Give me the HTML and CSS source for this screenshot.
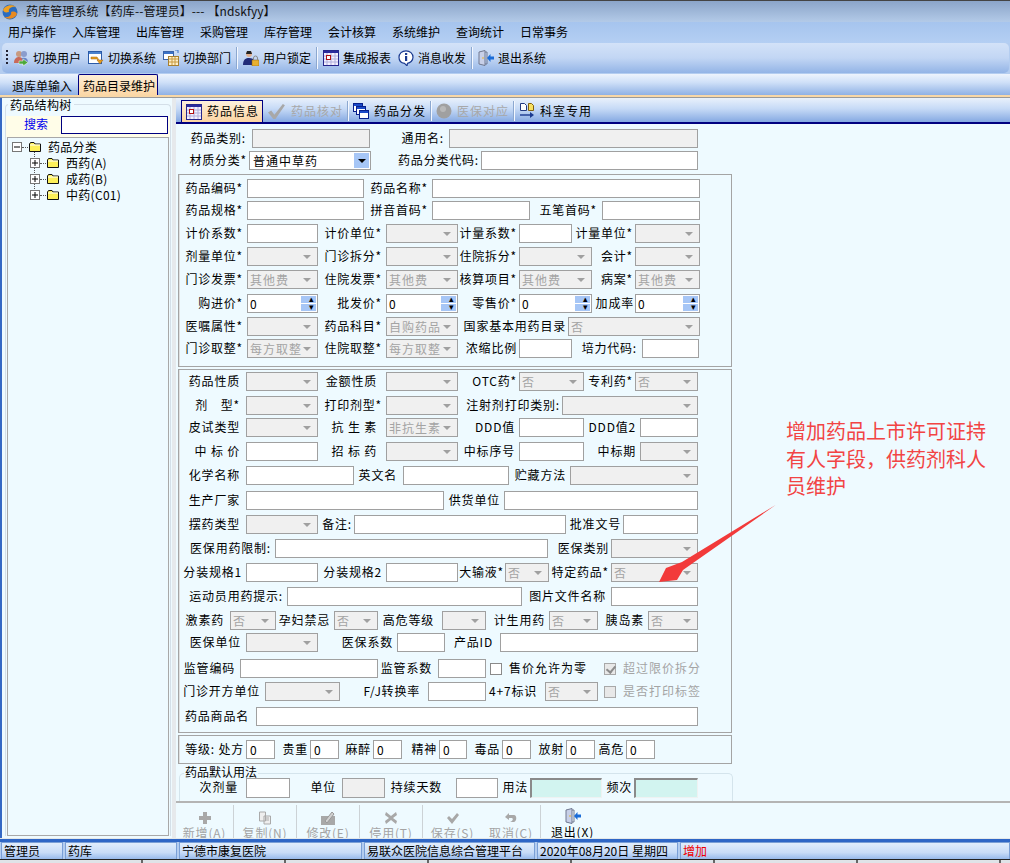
FILE: index.html
```
<!DOCTYPE html>
<html lang="zh">
<head>
<meta charset="utf-8">
<title>药库管理系统</title>
<link rel="stylesheet" href="styles.css">
</head>
<body>
<svg class="defs" width="0" height="0">
  <symbol id="grid" viewBox="0 0 16 16"><rect x=".5" y=".5" width="15" height="15" fill="#f4f0ff" stroke="#26268c"/><rect x="1" y="1" width="14" height="2" fill="#2a2a9c"/><path d="M1 6h14M1 9h14M1 12h14M4 3v12M8 3v12M12 3v12" stroke="#b0b0dc"/><rect x="3.5" y="5.5" width="4" height="4" fill="#fff" stroke="#b01010"/></symbol>
  <symbol id="folder" viewBox="0 0 12 10"><path d="M.5 9.5V2L1.5 .5H5l1 1.5h5.5v7.5z" fill="#fdf05a" stroke="#111"/><path d="M1 3h10" stroke="#fff"/></symbol>
  <symbol id="plus" viewBox="0 0 10 10"><rect x=".5" y=".5" width="9" height="9" fill="#fff" stroke="#777"/><path d="M2 5h6M5 2v6" stroke="#000"/></symbol>
  <symbol id="minus" viewBox="0 0 10 10"><rect x=".5" y=".5" width="9" height="9" fill="#fff" stroke="#777"/><path d="M2 5h6" stroke="#000"/></symbol>
</svg>

<header class="titlebar">
  <svg class="logo" viewBox="0 0 16 16" width="16" height="16"><circle cx="8" cy="8" r="7.5" fill="#2a6cc0"/><path d="M1 6C3 1 11 0 14 3 9 2 6 5 7 8 3 9 2 8 1 6z" fill="#f0a020"/><path d="M15 10c-2 5-9 6-13 3 5 1 8-2 7-5 4-1 5 0 6 2z" fill="#e88a20"/></svg>
  <span>药库管理系统【药库--管理员】--- 【ndskfyy】</span>
</header>

<nav class="menubar">
  <span>用户操作</span><span>入库管理</span><span>出库管理</span><span>采购管理</span><span>库存管理</span><span>会计核算</span><span>系统维护</span><span>查询统计</span><span>日常事务</span>
</nav>

<div class="toolbar">
  <i class="grip"></i>
  <div class="tool">
    <svg viewBox="0 0 16 16" width="16" height="16"><circle cx="6" cy="4" r="3" fill="#c89a80"/><circle cx="11" cy="4" r="3" fill="#8a9ccc"/><path d="M1 13c0-5 3-6 5-6s4 1 4 4v2z" fill="#c86a5a"/><path d="M9 8c3-1 6 0 6 4l-5 1z" fill="#6a86c8"/><path d="M6 11h4V9l5 3.5L10 16v-2H6z" fill="#4ca83a" stroke="#fff" stroke-width=".5"/></svg>
    <span>切换用户</span>
  </div>
  <div class="tool">
    <svg viewBox="0 0 16 16" width="16" height="16"><rect x=".5" y="1.5" width="13" height="12" fill="#fff" stroke="#2a5aa8"/><rect x="1" y="2" width="12" height="2" fill="#4a82d0"/><path d="M3 7h6l2 3h4l-3 4-3-4h1L9 9H3z" fill="#e8a020" stroke="#a06010" stroke-width=".5"/></svg>
    <span>切换系统</span>
  </div>
  <div class="tool">
    <svg viewBox="0 0 16 16" width="16" height="16"><rect x=".5" y="1.5" width="10" height="8" fill="#fff" stroke="#3a62a8"/><rect x="1" y="2" width="9" height="2" fill="#3a72c8"/><rect x="5.500" y="6.500" width="10" height="9" fill="#fff0c8" stroke="#a88030"/><path d="M6 9h9M6 12h9M9 7v8M12 7v8" stroke="#c89a40"/><path d="M12 0h3v3" fill="none" stroke="#3a72c8"/></svg>
    <span>切换部门</span>
  </div>
  <i class="sep"></i>
  <div class="tool">
    <svg viewBox="0 0 16 16" width="16" height="16"><circle cx="6" cy="4" r="3" fill="#e0b090"/><path d="M4 1h4l1 3H3z" fill="#222"/><path d="M0 15c0-6 3-7 6-7s5 1 5 3v4z" fill="#222c78"/><rect x="9" y="10" width="7" height="6" fill="#e8b030" stroke="#8a6010" stroke-width=".5"/><path d="M10.500 10V8a2 2 0 0 1 4 0v2" fill="none" stroke="#888"/></svg>
    <span>用户锁定</span>
  </div>
  <i class="sep"></i>
  <div class="tool"><svg width="16" height="16"><use href="#grid"/></svg><span>集成报表</span></div>
  <div class="tool">
    <svg viewBox="0 0 16 16" width="16" height="16"><path d="M8 .8c4 0 7 2.700 7 6.500 0 3.500-3 5.700-5.500 6l-.5 2.500-2.500-2.500C3.500 13 1 10.800 1 7.300 1 3.500 4 .8 8 .8z" fill="#fff" stroke="#1a3a90" stroke-width="1.200"/><rect x="7" y="3" width="2.200" height="2" fill="#1a3a90"/><rect x="7" y="6" width="2.200" height="5" fill="#1a3a90"/></svg>
    <span>消息收发</span>
  </div>
  <i class="sep"></i>
  <div class="tool">
    <svg viewBox="0 0 16 16" width="16" height="16"><path d="M1 2l6-1.500v15L1 14z" fill="#c8d0e8" stroke="#707890"/><path d="M7 2h2v12H7" fill="none" stroke="#707890"/><path d="M9 8l3.500-4v2.500H16v3h-3.500V12z" fill="#1a6cd8"/><circle cx="5" cy="8" r=".8" fill="#e8b020"/></svg>
    <span>退出系统</span>
  </div>
</div>

<div class="tabbar">
  <span class="tab">退库单输入</span>
  <span class="tab tab-on">药品目录维护</span>
</div>
<div class="stripe"></div>

<main class="main">
  <aside class="side">
    <div class="side-group">
      <span class="side-legend">药品结构树</span>
      <div class="search"><span class="search-lb">搜索</span><div class="search-box"></div></div>
      <div class="tree">
        <div class="node"><svg class="exp" width="10" height="10"><use href="#minus"/></svg><i class="dash"></i><svg width="12" height="10"><use href="#folder"/></svg><span class="node-name">药品分类</span></div>
        <div class="node node-kid"><i class="vline"></i><svg class="exp" width="10" height="10"><use href="#plus"/></svg><i class="dash"></i><svg width="12" height="10"><use href="#folder"/></svg><span class="node-name">西药(A)</span></div>
        <div class="node node-kid"><i class="vline"></i><svg class="exp" width="10" height="10"><use href="#plus"/></svg><i class="dash"></i><svg width="12" height="10"><use href="#folder"/></svg><span class="node-name">成药(B)</span></div>
        <div class="node node-kid"><i class="vline"></i><svg class="exp" width="10" height="10"><use href="#plus"/></svg><i class="dash"></i><svg width="12" height="10"><use href="#folder"/></svg><span class="node-name">中药(C01)</span></div>
      </div>
    </div>
  </aside>
  <div class="splitter"></div>

  <section class="work">
    <div class="subtabs">
      <div class="sub sub-on w82"><svg width="16" height="16"><use href="#grid"/></svg><span>药品信息</span></div>
      <div class="sub sub-off">
        <svg viewBox="0 0 18 16" width="19" height="17"><path d="M1 9l3-2 3 4L15 1l2 1L8 15H6z" fill="#a8a8a8"/></svg>
        <span>药品核对</span>
      </div>
      <i class="sub-sep"></i>
      <div class="sub">
        <svg viewBox="0 0 16 16" width="16" height="16"><rect x=".5" y=".5" width="9" height="8" fill="#fff" stroke="#08208c"/><rect x="1" y="1" width="8" height="2" fill="#1a4ac8"/><rect x="3.500" y="3.500" width="9" height="8" fill="#fff" stroke="#08208c"/><rect x="4" y="4" width="8" height="2" fill="#1a4ac8"/><rect x="6.500" y="7.500" width="9" height="8" fill="#fff" stroke="#08208c"/><rect x="7" y="8" width="8" height="2" fill="#1a4ac8"/></svg>
        <span>药品分发</span>
      </div>
      <i class="sub-sep"></i>
      <div class="sub sub-off">
        <svg viewBox="0 0 16 16" width="16" height="16"><circle cx="8" cy="8" r="7.500" fill="#a0a0a0"/><circle cx="7" cy="6" r="3" fill="#b8b8b8"/></svg>
        <span>医保对应</span>
      </div>
      <i class="sub-sep"></i>
      <div class="sub">
        <svg viewBox="0 0 16 16" width="16" height="16"><path d="M1.500 .5h4l2 2v5h-6z" fill="#fff" stroke="#223a80"/><path d="M9.500 .5h3l2 2v5h-5z" fill="#f8e060" stroke="#806010"/><path d="M1 12h11" stroke="#1a3a90" stroke-width="1.400"/><path d="M11 9l4 3-4 3z" fill="#1a3a90"/></svg>
        <span>科室专用</span>
      </div>
    </div>

    <div class="pane">
      <div class="form">
        <div class="row mt5"><label class="lb w74 pr6">药品类别:</label><div class="fld dis w118"></div><label class="lb w79 pr5">通用名:</label><div class="fld dis w249"></div></div>
        <div class="row mt3"><label class="lb w71 pr2">材质分类*</label><div class="fld sel sel-blue w122">普通中草药</div><label class="lb w110">药品分类代码:</label><div class="fld w217"></div></div>

        <fieldset class="group g1">
          <div class="row mt4"><label class="lb w67">药品编码*</label><div class="fld w117"></div><label class="lb w68">药品名称*</label><div class="fld w268"></div></div>
          <div class="row mt3"><label class="lb w67">药品规格*</label><div class="fld w117"></div><label class="lb w68">拼音首码*</label><div class="fld w98"></div><label class="lb w72">五笔首码*</label><div class="fld w98"></div></div>
          <div class="row mt4"><label class="lb w67">计价系数*</label><div class="fld w71"></div><label class="lb w68">计价单位*</label><div class="fld sel dis w72"></div><label class="lb w61">计量系数*</label><div class="fld w53"></div><label class="lb w63">计量单位*</label><div class="fld sel dis w65"></div></div>
          <div class="row mt4"><label class="lb w67">剂量单位*</label><div class="fld sel dis w71"></div><label class="lb w68">门诊拆分*</label><div class="fld sel dis w72"></div><label class="lb w61">住院拆分*</label><div class="fld sel dis w73"></div><label class="lb w43">会计*</label><div class="fld sel dis w65"></div></div>
          <div class="row mt4"><label class="lb w67">门诊发票*</label><div class="fld sel dis w71">其他费</div><label class="lb w68">住院发票*</label><div class="fld sel dis w72">其他费</div><label class="lb w61">核算项目*</label><div class="fld sel dis w73">其他费</div><label class="lb w43">病案*</label><div class="fld sel dis w65">其他费</div></div>
          <div class="row mt5"><label class="lb w67">购进价*</label><div class="fld spin w71">0</div><label class="lb w68">批发价*</label><div class="fld spin w72">0</div><label class="lb w61">零售价*</label><div class="fld spin w73">0</div><label class="lb w43 pr1">加成率</label><div class="fld spin w65">0</div></div>
          <div class="row mt4"><label class="lb w67">医嘱属性*</label><div class="fld sel dis w71"></div><label class="lb w68">药品科目*</label><div class="fld sel dis w72">自购药品</div><label class="lb w110">国家基本用药目录</label><div class="fld sel dis w132">否</div></div>
          <div class="row mt3"><label class="lb w67">门诊取整*</label><div class="fld sel dis w71">每方取整</div><label class="lb w68">住院取整*</label><div class="fld sel dis w72">每方取整</div><label class="lb w61">浓缩比例</label><div class="fld w53"></div><label class="lb w70 pr5">培力代码:</label><div class="fld w57"></div></div>
        </fieldset>

        <fieldset class="group g2">
          <div class="row mt2"><label class="lb w66 pr6">药品性质</label><div class="fld sel dis w72"></div><label class="lb w68 pr9">金额性质</label><div class="fld sel dis w72"></div><label class="lb w61">OTC药*</label><div class="fld sel dis w65">否</div><label class="lb w51">专利药*</label><div class="fld sel dis w63">否</div></div>
          <div class="row mt5"><label class="lb w66 pr6">剂　型*</label><div class="fld sel dis w72"></div><label class="lb w68">打印剂型*</label><div class="fld sel dis w72"></div><label class="lb w104">注射剂打印类别:</label><div class="fld sel dis w136"></div></div>
          <div class="row mt3"><label class="lb w66 pr6">皮试类型</label><div class="fld sel dis w72"></div><label class="lb w68 pr9">抗 生 素</label><div class="fld sel dis w72">非抗生素</div><label class="lb w61 pr4">DDD值</label><div class="fld w65"></div><label class="lb w56 pr4">DDD值2</label><div class="fld w58"></div></div>
          <div class="row mt5"><label class="lb w66 pr6">中 标 价</label><div class="fld w72"></div><label class="lb w68 pr9">招 标 药</label><div class="fld sel dis w72"></div><label class="lb w61 pr4">中标序号</label><div class="fld w65"></div><label class="lb w56 pr4">中标期</label><div class="fld sel dis w58"></div></div>
          <div class="row mt5"><label class="lb w66 pr6">化学名称</label><div class="fld w108"></div><label class="lb w49 pr6">英文名</label><div class="fld w106"></div><label class="lb w61 pr4">贮藏方法</label><div class="fld sel dis w128"></div></div>
          <div class="row mt6"><label class="lb w66 pr6">生产厂家</label><div class="fld w198"></div><label class="lb w60 pr4">供货单位</label><div class="fld w194"></div></div>
          <div class="row mt5"><label class="lb w66 pr6">摆药类型</label><div class="fld sel dis w72"></div><label class="lb w36 pr2">备注:</label><div class="fld w212"></div><label class="lb w57">批准文号</label><div class="fld w75"></div></div>
          <div class="row mt5"><label class="lb w95 pr4">医保用药限制:</label><div class="fld w273"></div><label class="lb w63">医保类别</label><div class="fld sel dis w87"></div></div>
          <div class="row mt5"><label class="lb w66 pr4">分装规格1</label><div class="fld w72"></div><label class="lb w68">分装规格2</label><div class="fld w72"></div><label class="lb w47 pr1">大输液*</label><div class="fld sel dis w44">否</div><label class="lb w62">特定药品*</label><div class="fld sel dis w87">否</div></div>
          <div class="row mt5"><label class="lb w107 pr4">运动员用药提示:</label><div class="fld w235"></div><label class="lb w89 pr5">图片文件名称</label><div class="fld w87"></div></div>
          <div class="row mt5"><label class="lb w50 pr6">激素药</label><div class="fld sel dis w46">否</div><label class="lb w58 pr4">孕妇禁忌</label><div class="fld sel dis w44">否</div><label class="lb w64 pr8">高危等级</label><div class="fld sel dis w44"></div><label class="lb w63 pr4">计生用药</label><div class="fld sel dis w49">否</div><label class="lb w50 pr4">胰岛素</label><div class="fld sel dis w50">否</div></div>
          <div class="row mt3"><label class="lb w66 pr5">医保单位</label><div class="fld sel dis w72"></div><label class="lb w79 pr4">医保系数</label><div class="fld w48"></div><label class="lb w55 pr7">产品ID</label><div class="fld w198"></div></div>
          <div class="row mt7"><label class="lb w60 pr5">监管编码</label><div class="fld w138"></div><label class="lb w60 pr6">监管系数</label><div class="fld w48"></div><div class="chk w114"><i class="box"></i>售价允许为零</div><div class="chk chk-off w96"><i class="box box-on"></i>超过限价拆分</div></div>
          <div class="row mt4"><label class="lb w85 pr5">门诊开方单位</label><div class="fld sel dis w75"></div><label class="lb w88 pr8">F/J转换率</label><div class="fld w58"></div><label class="lb w59 pr8">4+7标识</label><div class="fld sel dis w53">否</div><div class="chk chk-off chk-far w96"><i class="box"></i>是否打印标签</div></div>
          <div class="row mt6"><label class="lb w76 pr7">药品商品名</label><div class="fld w442"></div></div>
        </fieldset>

        <fieldset class="group g3">
          <div class="row mt4"><label class="lb w66">等级: 处方</label><div class="fld num w29">0</div><label class="lb w35">贵重</label><div class="fld num w29">0</div><label class="lb w34">麻醉</label><div class="fld num w29">0</div><label class="lb w37">精神</label><div class="fld num w28">0</div><label class="lb w35">毒品</label><div class="fld num w29">0</div><label class="lb w35">放射</label><div class="fld num w29">0</div><label class="lb w31">高危</label><div class="fld num w29">0</div></div>
        </fieldset>

        <div class="usage">
          <span class="usage-legend">药品默认用法</span>
          <div class="usage-box">
            <div class="row"><label class="lb w66 pr8">次剂量</label><div class="fld w44"></div><label class="lb w52 pr6">单位</label><div class="fld dis w43"></div><label class="lb w71 pr14">持续天数</label><div class="fld w42"></div><label class="lb w32">用法</label><div class="fld teal w72"></div><label class="lb w32">频次</label><div class="fld teal w64"></div></div>
          </div>
        </div>
      </div>

      <div class="actions">
        <div class="act w58 act-sep"><svg viewBox="0 0 14 14" width="14" height="14"><path d="M5 1h4v4h4v4H9v4H5V9H1V5h4z" fill="#a8a8a8"/></svg><span>新增(A)</span></div>
        <div class="act w63 act-sep"><svg viewBox="0 0 14 14" width="14" height="14"><path d="M1.500 1h6v9h-6zM6 5h6.500v8H6z" fill="#eee" stroke="#aaa"/><path d="M8 7h3M8 9h3" stroke="#aaa"/></svg><span>复制(N)</span></div>
        <div class="act w63 act-sep"><svg viewBox="0 0 16 14" width="16" height="14"><path d="M1 5h14v9H1z" fill="#a8a8a8"/><path d="M5 10l7-9 2 2-7 9z" fill="#d0d0d0" stroke="#999"/></svg><span>修改(E)</span></div>
        <div class="act w63 act-sep"><svg viewBox="0 0 14 14" width="14" height="14"><path d="M2 1l5 4 5-4 1 3-4 3 4 3-1 3-5-4-5 4-1-3 4-3-4-3z" fill="#a8a8a8"/></svg><span>停用(T)</span></div>
        <div class="act w59"><svg viewBox="0 0 14 14" width="14" height="14"><path d="M1 7l2-2 3 3 5-6 2 2-7 9z" fill="#a8a8a8"/></svg><span>保存(S)</span></div>
        <div class="act w59 act-sep"><svg viewBox="0 0 14 14" width="14" height="14"><path d="M1 6l4-4v2h5c3 0 3 6 0 7H6c3-1 4-4 1-4H5v2z" fill="#a8a8a8"/></svg><span>取消(C)</span></div>
        <div class="act act-live w63"><svg viewBox="0 0 16 16" width="16" height="16"><path d="M1 2l6-1.500v15L1 14z" fill="#c8d0e8" stroke="#707890"/><path d="M7 2h2v12H7" fill="none" stroke="#707890"/><path d="M9 8l3.500-4v2.500H16v3h-3.500V12z" fill="#1a6cd8"/><circle cx="5" cy="8" r=".8" fill="#e8b020"/></svg><span>退出(X)</span></div>
      </div>
    </div>
  </section>
</main>

<div class="bluebar"></div>
<footer class="status">
  <span class="stat w62">管理员</span>
  <span class="stat w112">药库</span>
  <span class="stat w183">宁德市康复医院</span>
  <span class="stat w171">易联众医院信息综合管理平台</span>
  <span class="stat w141">2020年08月20日 星期四</span>
  <span class="stat stat-red stat-grow">增加</span>
</footer>
<div class="taskstrip"><i></i><i></i><i></i><i></i><i></i><i></i><i></i></div>

<div class="note">增加药品上市许可证持<br>有人字段，供药剂科人<br>员维护</div>
<svg class="arrow" width="1010" height="863" viewBox="0 0 1010 863"><polygon points="775.6,505 682,562 666,568 659,582 677,580 683,570" fill="#f23a3a"/></svg>
</body>
</html>
```

FILE: styles.css
```
* { box-sizing: border-box; }
html, body { margin: 0; padding: 0; }
body {
  position: relative;
  width: 1010px;
  height: 863px;
  overflow: hidden;
  display: flex;
  flex-direction: column;
  background: #b4cdf0;
  color: #000;
  font: 12px/1.2 "Noto Sans CJK SC", "Liberation Sans", sans-serif;
}
.defs { position: absolute; }
i { display: block; font-style: normal; }
svg { flex: none; display: block; }

.titlebar {
  flex: none;
  height: 22px;
  display: flex;
  align-items: center;
  gap: 8px;
  padding-left: 2px;
  border-top: 1px solid #444;
  background: linear-gradient(#8ba5c9, #b3cae8);
  color: #111;
  letter-spacing: .1px;
}
.menubar {
  flex: none;
  height: 21px;
  display: flex;
  align-items: center;
  background: linear-gradient(#a6c4ee, #b4cff3);
}
.menubar span { padding: 0 8px; width: 64px; white-space: nowrap; }

.toolbar {
  flex: none;
  height: 30px;
  margin: 0 1px 1px 2px;
  display: flex;
  align-items: center;
  padding-left: 4px;
  border-radius: 5px;
  background: linear-gradient(#d3e2f8 0, #c2d6f4 50%, #93b4e6 100%);
}
.grip { width: 2px; height: 16px; margin-right: 5px; background: repeating-linear-gradient(#223 0 2px, transparent 2px 4px); }
.tool { display: flex; align-items: center; gap: 4px; width: 75px; white-space: nowrap; }
.sep { width: 2px; height: 22px; margin: 0 5px 0 -2px; background: #8ca8d0; border-right: 1px solid #f4f8ff; }

.tabbar {
  flex: none;
  height: 21px;
  display: flex;
  align-items: flex-end;
  gap: 6px;
  padding-left: 12px;
  background: linear-gradient(#eef4fd, #cfe0f8 40%, #8fb1e5);
}
.tab { height: 17px; line-height: 16px; white-space: nowrap; }
.tab-on {
  height: 21px;
  padding: 2px 4px 0;
  width: 80px;
  line-height: 17px;
  border: 1px solid #000080;
  border-bottom: 0;
  border-radius: 2px 2px 0 0;
  background: linear-gradient(#fdeed6, #fbd7a6);
}
.stripe { flex: none; height: 3px; background: #f8d7a6; border-bottom: 1px solid #9a9a9a; }

.main { flex: none; height: 740px; display: flex; background: #eefaff; border-left: 2px solid #3468c4; }
.side { flex: none; width: 170px; padding: 6px 1px 2px 3px; }
.side-group { position: relative; height: 100%; border: 1px solid #d4dfe8; border-bottom: 0; border-radius: 4px 4px 0 0; padding-top: 11px; }
.side-legend { position: absolute; left: 2px; top: -7px; padding: 0 2px; background: #eefaff; line-height: 13px; letter-spacing: .3px; }
.search { height: 21px; display: flex; align-items: flex-start; background: #fffde8; }
.search-lb { width: 55px; padding: 1px 0 0 18px; color: #0000ee; letter-spacing: 0; white-space: nowrap; }
.search-box { width: 107px; height: 18px; background: #fff; border: 1px solid #000080; }
.tree { height: 699px; margin: 0 1px 0 1px; border: 1px solid #a8a8a8; padding: 1px 0 0 4px; background: #eefaff; }
.node { position: relative; height: 16px; display: flex; align-items: center; }
.node-kid { padding-left: 18px; }
.exp { position: relative; }
.dash { width: 6px; height: 0; margin-right: 1px; border-top: 1px dotted #555; }
.node-name { margin-left: 7px; letter-spacing: .3px; white-space: nowrap; }
.vline { position: absolute; left: 22px; top: -3px; height: 7px; border-left: 1px dotted #555; }
.splitter { flex: none; width: 4px; background: #e6e9ec; }

.work { flex: none; width: 834px; display: flex; flex-direction: column; }
.subtabs {
  flex: none;
  height: 26px;
  display: flex;
  align-items: flex-end;
  padding: 2px 0 0 5px;
  background: linear-gradient(#e9f1fc, #c6daf6 45%, #85a9e2);
  border-bottom: 2px solid #000080;
}
.sub { height: 22px; display: flex; align-items: center; gap: 5px; padding: 0 4px; white-space: nowrap; letter-spacing: 1px; }
.sub-on {
  flex: none;
  border: 1px solid #000080;
  border-bottom: 0;
  padding-left: 4px;
  background: linear-gradient(#fdf0dc, #fbd4a2);
}
.sub-off { color: #a8a8a8; }
.sub-sep { width: 2px; height: 20px; align-self: center; background: #8ca8d0; border-right: 1px solid #f4f8ff; }

.pane { flex: 1; display: flex; flex-direction: column; background: #eefaff; }
.form { height: 677px; padding-left: 2px; }
.row { display: flex; height: 19px; align-items: stretch; }
.mt2 { margin-top: 2px; } .mt3 { margin-top: 3px; } .mt4 { margin-top: 4px; } .mt5 { margin-top: 5px; } .mt6 { margin-top: 6px; } .mt7 { margin-top: 7px; }

.lb { flex: none; text-align: right; padding-right: 2px; line-height: 18px; letter-spacing: .8px; white-space: nowrap; }
.lb.w67, .lb.w68 { padding-right: 4px; }
.lb.w72 { padding-right: 5px; }
.lb.pr1 { padding-right: 1px; } .lb.pr2 { padding-right: 2px; } .lb.pr4 { padding-right: 4px; } .lb.pr5 { padding-right: 5px; } .lb.pr6 { padding-right: 6px; } .lb.pr7 { padding-right: 7px; } .lb.pr8 { padding-right: 8px; } .lb.pr9 { padding-right: 9px; } .lb.pr14 { padding-right: 14px; }

.fld { flex: none; position: relative; background: #fff; border: 1px solid #a0a0a0; padding-left: 2px; line-height: 17px; letter-spacing: 1px; white-space: nowrap; overflow: hidden; }
.dis { background: #f0f0f0; color: #a4a4a4; }
.sel::after { content: ""; position: absolute; right: 6px; top: 7px; border: 4px solid transparent; border-top: 4px solid #a0a0a0; border-bottom: 0; }
.sel-blue { background: #fff; color: #000; padding-left: 3px; }
.sel-blue::before { content: ""; position: absolute; right: 1px; top: 1px; bottom: 1px; width: 15px; background: #a6c6f6; }
.sel-blue::after { right: 4px; border-top-color: #000; }
.spin::before { content: ""; position: absolute; right: 1px; top: 1px; bottom: 1px; width: 15px; background: linear-gradient(#a6c6f6 0 46%, #fff 46% 54%, #a6c6f6 54%); }
.spin::after { content: "▴\A▾"; white-space: pre; position: absolute; right: 3px; top: 0; font-size: 9px; line-height: 8px; color: #000; letter-spacing: 0; }
.num { padding-left: 3px; }
.teal { background: #d2f4f0; border-color: #8a8a8a #eef2f2 #eef2f2 #8a8a8a; border-width: 2px 1px 1px 2px; }

.group { display: block; margin: 0; padding: 0 0 0 1px; width: 554px; border: 1px solid #a4a4a4; box-shadow: inset 1px 0 #e0e0e0; min-width: 0; }
.g1 { height: 193px; margin-top: 4px; }
.g2 { height: 364px; margin-top: 2px; }
.g3 { height: 29px; margin-top: 2px; }

.usage { position: relative; width: 555px; padding-top: 9px; }
.usage-legend { position: absolute; left: 6px; top: 1px; padding: 0 1px; background: #eefaff; letter-spacing: 0; line-height: 13px; z-index: 1; }
.usage-box { height: 28px; margin-left: 1px; border: 1px solid #d4e4ec; border-bottom: 0; border-radius: 5px 5px 0 0; padding-top: 4px; }
.usage .row { height: 20px; }

.chk { flex: none; display: flex; align-items: center; gap: 7px; margin-left: 4px; letter-spacing: 1px; white-space: nowrap; }
.chk + .chk { margin-left: 0; padding-left: 0; }
.chk-far { margin-left: 6px; }
.chk-off { color: #a4a4a4; }
.box { flex: none; width: 12px; height: 12px; background: #fff; border: 1px solid #8a8a8a; }
.chk-off .box { background: #e8e8e8; border-color: #a8a8a8; }
.box-on { position: relative; }
.box-on::after { content: ""; position: absolute; left: 3px; top: 0; width: 4px; height: 7px; border: solid #8c8c8c; border-width: 0 2px 2px 0; transform: rotate(40deg); }

.actions { flex: none; height: 37px; display: flex; border-top: 2px solid #b4b4b4; padding-top: 2px; }
.act { flex: none; height: 33px; display: flex; flex-direction: column; align-items: center; padding-top: 6px; color: #a4a4a4; white-space: nowrap; letter-spacing: .8px; line-height: 13px; }
.act span { margin-top: 1px; }
.act-sep { border-right: 1px solid #ccd2d6; }
.act-live { color: #000; padding-top: 3px; }

.bluebar { flex: none; height: 4px; border-top: 1px solid #e4e8ea; background: #2e66c6; }
.status { flex: none; height: 18px; display: flex; padding-left: 1px; gap: 2px; background: #b4cdf0; }
.stat { flex: none; height: 18px; padding: 0 0 0 2px; line-height: 15px; border: 1px solid #7a9fd6; background: linear-gradient(#e0edfc, #c8dcf8 60%, #98baec); white-space: nowrap; }
.stat-red { color: #f00000; }
.stat-grow { flex: 1; }
.taskstrip { flex: none; height: 4px; margin-top: -1px; display: flex; background: #dfe3e8; border-top: 1px solid #222; }
.taskstrip i { width: 143px; border-right: 2px solid #666; }

.note { position: absolute; left: 786px; top: 417px; width: 215px; color: #f24444; font-size: 20px; line-height: 27.5px; white-space: nowrap; }
.arrow { position: absolute; left: 0; top: 0; pointer-events: none; }

.w28{width:28px}.w29{width:29px}.w31{width:31px}.w32{width:32px}.w34{width:34px}.w35{width:35px}.w36{width:36px}.w37{width:37px}.w42{width:42px}.w43{width:43px}.w44{width:44px}.w46{width:46px}.w47{width:47px}.w48{width:48px}.w49{width:49px}.w50{width:50px}.w51{width:51px}.w52{width:52px}.w53{width:53px}.w55{width:55px}.w56{width:56px}.w57{width:57px}.w58{width:58px}.w59{width:59px}.w60{width:60px}.w61{width:61px}.w62{width:62px}.w63{width:63px}.w64{width:64px}.w65{width:65px}.w66{width:66px}.w67{width:67px}.w68{width:68px}.w70{width:70px}.w71{width:71px}.w72{width:72px}.w73{width:73px}.w74{width:74px}.w75{width:75px}.w76{width:76px}.w79{width:79px}.w82{width:82px}.w85{width:85px}.w87{width:87px}.w88{width:88px}.w89{width:89px}.w95{width:95px}.w96{width:96px}.w98{width:98px}.w104{width:104px}.w106{width:106px}.w107{width:107px}.w108{width:108px}.w110{width:110px}.w112{width:112px}.w114{width:114px}.w117{width:117px}.w118{width:118px}.w122{width:122px}.w128{width:128px}.w132{width:132px}.w136{width:136px}.w138{width:138px}.w141{width:141px}.w171{width:171px}.w183{width:183px}.w194{width:194px}.w198{width:198px}.w212{width:212px}.w217{width:217px}.w235{width:235px}.w249{width:249px}.w268{width:268px}.w273{width:273px}.w442{width:442px}
```
